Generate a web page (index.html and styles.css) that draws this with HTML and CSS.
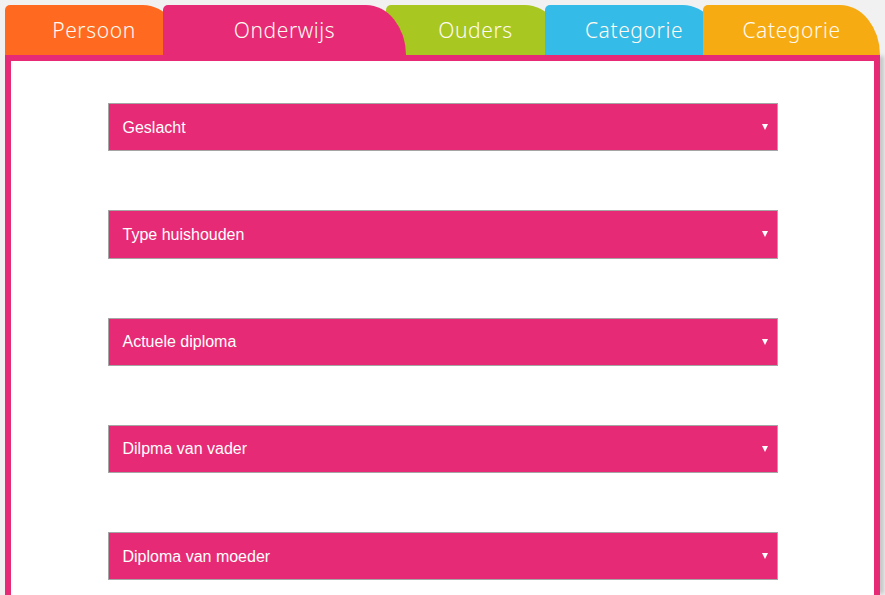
FILE: index.html
```html
<!DOCTYPE html>
<html lang="nl">
<head>
<meta charset="utf-8">
<title>Onderwijs</title>
<link rel="stylesheet" href="styles.css">
</head>
<body>
<div class="page">
  <nav class="tabs">
    <div class="tab tab-orange">Persoon</div>
    <div class="tab tab-pink active">Onderwijs</div>
    <div class="tab tab-green">Ouders</div>
    <div class="tab tab-cyan">Categorie</div>
    <div class="tab tab-yellow">Categorie</div>
  </nav>
  <main class="panel">
    <div class="field"><span>Geslacht</span><i class="arrow"></i></div>
    <div class="field"><span>Type huishouden</span><i class="arrow"></i></div>
    <div class="field"><span>Actuele diploma</span><i class="arrow"></i></div>
    <div class="field"><span>Dilpma van vader</span><i class="arrow"></i></div>
    <div class="field"><span>Diploma van moeder</span><i class="arrow"></i></div>
  </main>
</div>
</body>
</html>
```
FILE: styles.css
```css
html, body {
  margin: 0;
  padding: 0;
  background: #f1f1f1;
  height: 100%;
  overflow: hidden;
}
.page {
  padding: 5px 5px 0 5px;
  width: 875px;
  display: flex;
  flex-direction: column;
  height: 590px;
}
.tabs {
  display: flex;
  height: 50px;
}
.tab {
  position: relative;
  width: 178px;
  height: 50px;
  margin-left: -20px;
  border-radius: 5px 40px 0 0 / 5px 50px 0 0;
  color: #fffaf0;
  font-family: "Noto Sans", sans-serif;
  font-weight: 300;
  font-size: 21px;
  letter-spacing: 0.6px;
  line-height: 50px;
  text-align: center;
  flex: none;
}
.tab:first-child { margin-left: 0; }
.tab-orange { background: #ff6a20; z-index: 1; width: 178px; }
.tab-pink { background: #e62a75; z-index: 9; width: 243px; }
.tab-green { background: #a8c721; z-index: 3; width: 179px; }
.tab-cyan { background: #35bbe8; z-index: 4; width: 178px; }
.tab-yellow { background: #f7ab12; z-index: 5; width: 177px; }
.panel {
  flex: 1;
  background: #fff;
  border: 6px solid #e62a75;
  border-bottom: none;
  padding-top: 42px;
  display: flex;
  flex-direction: column;
  align-items: center;
  gap: 59px;
  box-shadow: 5px 0 4px -1px rgba(0,0,0,0.18);
}
.field {
  box-sizing: border-box;
  width: 670px;
  height: 48.25px;
  flex: none;
  background: #e62a75;
  border: 1px solid #a5a5a5;
  display: flex;
  align-items: center;
  justify-content: space-between;
  padding: 1px 9px 0 14px;
  color: #fff;
  font-family: "Liberation Sans", Arial, sans-serif;
  font-size: 16px;
}
.arrow {
  width: 0;
  height: 0;
  border-left: 3.5px solid transparent;
  border-right: 3.5px solid transparent;
  border-top: 6px solid #fff;
  margin-top: -1px;
}
```
